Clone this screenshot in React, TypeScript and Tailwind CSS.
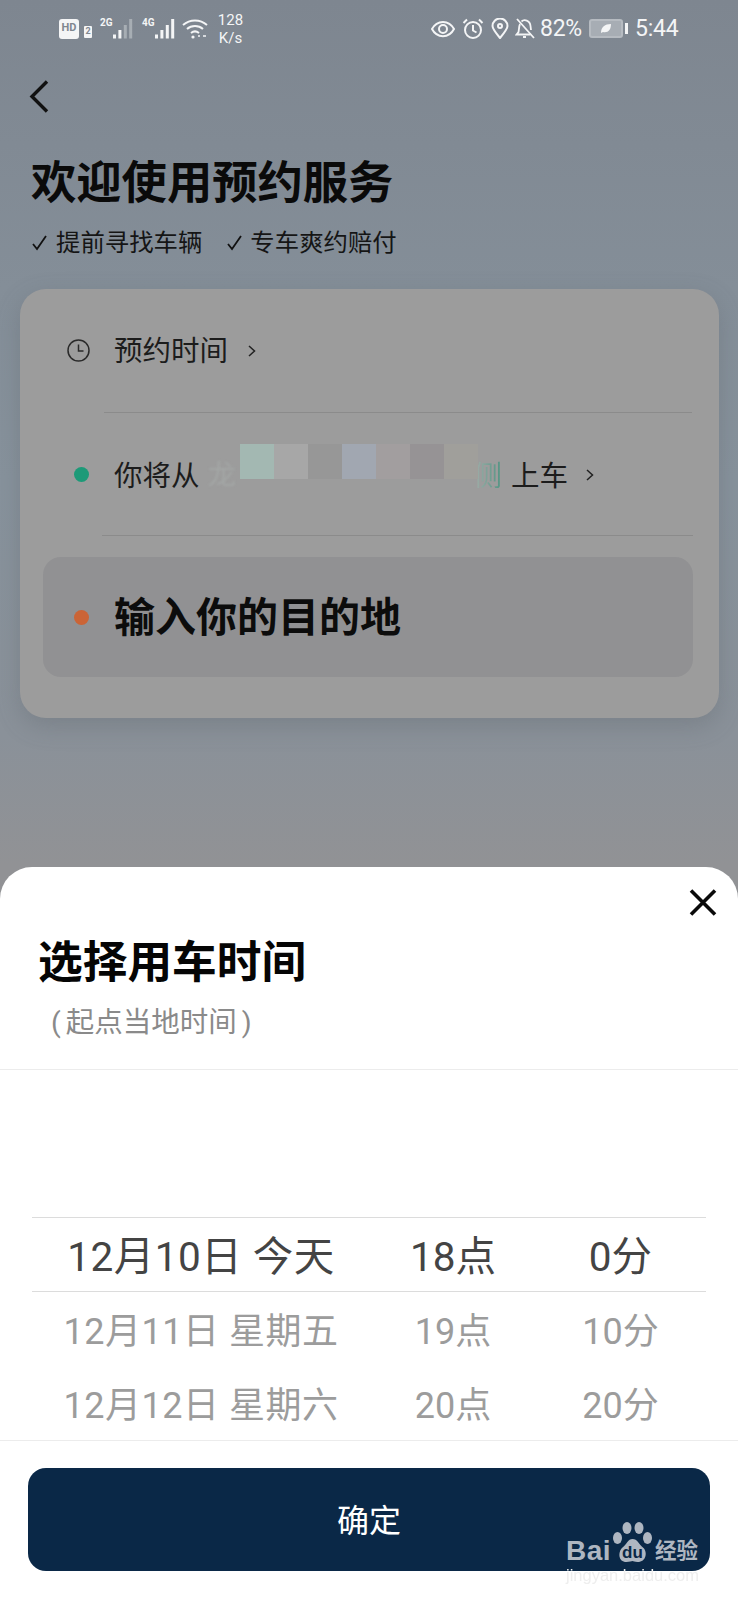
import React from "react";

const Bars = ({ faded }: { faded: number }) => (
  <svg width="22" height="20" viewBox="0 0 22 20">
    {[0, 1, 2, 3].map((i) => (
      <rect
        key={i}
        x={1 + i * 5.4}
        y={[15.5, 11, 6, 0][i]}
        width="3"
        height={[4, 8.5, 13.5, 19.5][i]}
        fill="#f4f5f6"
        opacity={i >= faded ? 0.35 : 1}
      />
    ))}
  </svg>
);

const Chevron = () => (
  <svg width="8" height="12" viewBox="0 0 8 12" fill="none" stroke="#222" strokeWidth="1.5">
    <path d="M1 1l5.5 5L1 11" />
  </svg>
);

const Check = () => (
  <svg width="15" height="16" viewBox="0 0 15 16" fill="none" stroke="#111" strokeWidth="1.8">
    <path d="M1 9l4 5L14 1" />
  </svg>
);

const patches = [
  "bg-[#a3b8b2]",
  "bg-[#a7a7a7]",
  "bg-[#979797]",
  "bg-[#a1a7b1]",
  "bg-[#a29e9f]",
  "bg-[#969395]",
  "bg-[#a09f9b]",
];

const rows = [
  { d: "12月10日 今天", h: "18点", m: "0分", cls: "text-[40.500px] text-[#444]", line: "border-y border-[#dcdcdc] h-[75px]" },
  { d: "12月11日 星期五", h: "19点", m: "10分", cls: "text-[36px] text-[#9c9c9c]", line: "h-[74px]" },
  { d: "12月12日 星期六", h: "20点", m: "20分", cls: "text-[36px] text-[#9c9c9c]", line: "h-[74px]" },
];

export default function App() {
  return (
    <div className="relative flex h-[1600px] w-[738px] flex-col overflow-hidden bg-[linear-gradient(180deg,#7e8690_0%,#848e98_18%,#87929c_30%,#8a9199_46%,#919295_54%)] font-['Roboto','Noto_Sans_CJK_SC',sans-serif]">
      {/* status bar */}
      <div className="flex h-[56px] shrink-0 items-center pl-[59px] pt-[1px] text-[#f4f5f6]">
        <div className="flex h-[20px] w-[20px] items-center justify-center rounded-[3px] bg-[#f4f5f6] text-[11px] font-bold text-[#7f8790]">
          HD
        </div>
        <div className="ml-[5px] mt-[6px] flex h-[12px] w-[8px] items-center justify-center rounded-[1px] bg-[#f4f5f6] text-[9px] font-bold leading-none text-[#7f8790]">
          2
        </div>
        <div className="ml-[8px] mb-[12px] w-[12px] text-[10px] font-bold leading-none">2G</div>
        <Bars faded={2} />
        <div className="ml-[8px] mb-[12px] w-[12px] text-[10px] font-bold leading-none">4G</div>
        <Bars faded={4} />
        <svg className="ml-[6px]" width="26" height="20" viewBox="0 0 26 20" fill="none" stroke="#f4f5f6" strokeWidth="2">
          <path d="M1 6c7-6 17-6 24 0M5 10c4.500-4 11.500-4 16 0M9 14c2.500-2 5.500-2 8 0" />
          <circle cx="11" cy="18" r="1.600" fill="#f4f5f6" stroke="none" />
          <path d="M16 17h2M21 17h3" strokeWidth="1.500" />
        </svg>
        <div className="ml-[9px] w-[27px] text-center text-[15px] leading-[18px]">
          <div>128</div>
          <div>K/s</div>
        </div>
        <svg className="ml-[187px]" width="24" height="18" viewBox="0 0 24 18" fill="none" stroke="#f4f5f6" strokeWidth="2">
          <path d="M1 9c5-9.500 17-9.500 22 0c-5 9.500-17 9.500-22 0z" />
          <circle cx="12" cy="9" r="4" />
        </svg>
        <svg className="ml-[7px]" width="22" height="22" viewBox="0 0 22 22" fill="none" stroke="#f4f5f6" strokeWidth="2">
          <circle cx="11" cy="12" r="8" />
          <path d="M11 7v5.500l3.500 2M1.500 5L5 1.500M20.500 5L17 1.500" />
        </svg>
        <svg className="ml-[7px]" width="18" height="21" viewBox="0 0 18 21" fill="none" stroke="#f4f5f6" strokeWidth="2">
          <path d="M9 20C4 14 1.500 11 1.500 8a7.500 7.500 0 0115 0c0 3-2.500 6-7.500 12z" />
          <circle cx="9" cy="8" r="2" />
        </svg>
        <svg className="ml-[6px]" width="20" height="21" viewBox="0 0 20 21" fill="none" stroke="#f4f5f6" strokeWidth="1.800">
          <path d="M5 6c-1 2-1 6-1.500 8L1.500 16.500h14M6.500 3.500C9 1 15 2 15.500 8l.5 4" />
          <path d="M8 19h3M2 1l17 19" />
        </svg>
        <div className="ml-[5px] w-[42px] text-[23px] leading-none tracking-[-0.3px]">82%</div>
        <div className="ml-[7px] flex h-[19px] w-[34px] items-center justify-center rounded-[3px] border-2 border-[#b6bbc1] bg-[#a7adb4]">
          <svg width="12" height="11" viewBox="0 0 12 11">
            <path d="M1 10C1 4 5 1 11 1c0 6-3 9-8 8z" fill="#f4f5f6" />
          </svg>
        </div>
        <div className="ml-[2px] h-[11px] w-[3px] bg-[#f4f5f6]" />
        <div className="ml-[7px] text-[23px] leading-none tracking-[-0.2px]">5:44</div>
      </div>

      {/* header */}
      <div className="pl-[29px] pt-[24px]">
        <svg width="20" height="33" viewBox="0 0 20 33" fill="none" stroke="#111" strokeWidth="3.400">
          <path d="M18 1.500L3 16.500l15 15" />
        </svg>
      </div>
      <h1 className="ml-[31px] mt-[43px] mb-[-2px] text-[45.300px] font-bold leading-[56px] text-[#0a0a0a]">欢迎使用预约服务</h1>
      <div className="ml-[32px] mt-[18px] flex items-center text-[24.400px] leading-[30px] text-[#151515]">
        <Check />
        <span className="ml-[9px]">提前寻找车辆</span>
        <span className="ml-[25px]"><Check /></span>
        <span className="ml-[8px]">专车爽约赔付</span>
      </div>

      {/* card */}
      <div className="ml-[20px] mt-[31px] flex h-[429px] w-[699px] flex-col rounded-[26px] bg-[#9c9c9c] shadow-[0_8px_24px_rgba(85,92,100,0.3)]">
        <div className="flex h-[123px] items-center pl-[47px] text-[28.500px] text-[#1c1c1c]">
          <svg width="23" height="23" viewBox="0 0 23 23" fill="none" stroke="#2a2a2a" strokeWidth="1.500">
            <circle cx="11.500" cy="11.500" r="10.500" />
            <path d="M11.500 5.500v6.500h5" />
          </svg>
          <span className="ml-[24px] pt-[4px]">预约时间</span>
          <span className="ml-[20px]"><Chevron /></span>
        </div>
        <div className="ml-[84px] h-px w-[588px] bg-[#8b8b8b]" />
        <div className="flex h-[122px] items-center pl-[54px] text-[28.500px] text-[#1c1c1c]">
          <div className="h-[15px] w-[15px] rounded-full bg-[#1d9a78]" />
          <span className="ml-[25px] pt-[6px]">你将从</span>
          <div className="relative h-[40px] w-[274px]">
            <span className="ml-[8px] inline-block pt-[2px] leading-[40px] text-[#a3a6a5] blur-[1px]">龙</span>
            <div className="absolute left-[40px] top-[-10px] flex">
              {patches.map((p) => (
                <div key={p} className={`h-[35px] w-[34px] ${p}`} />
              ))}
            </div>
          </div>
          <span className="bg-[linear-gradient(90deg,#a4aeaa,#4f9482)] bg-clip-text pt-[6px] text-transparent">侧</span>
          <span className="ml-[9px] pt-[6px]">上车</span>
          <span className="ml-[18px] mt-[2px]"><Chevron /></span>
        </div>
        <div className="ml-[82px] h-px w-[591px] bg-[#8b8b8b]" />
        <div className="ml-[23px] mt-[21px] flex h-[120px] w-[650px] items-center rounded-[18px] bg-[#919193] pl-[31px]">
          <div className="h-[15px] w-[15px] rounded-full bg-[#cb6436]" />
          <span className="ml-[25px] pt-[2px] text-[41px] font-bold leading-none text-[#0c0c0c]">输入你的目的地</span>
        </div>
      </div>

      {/* bottom sheet */}
      <div className="mt-auto flex h-[733px] w-full flex-col rounded-t-[32px] bg-white">
        <div className="flex justify-end pr-[21px] pt-[22px]">
          <svg width="28" height="27" viewBox="0 0 28 27" fill="none" stroke="#0a0a0a" strokeWidth="3.600">
            <path d="M2 1.500l24 24M26 1.500l-24 24" />
          </svg>
        </div>
        <h2 className="ml-[38px] mt-[19px] text-[44.700px] font-bold leading-[56px] text-[#050505]">选择用车时间</h2>
        <div className="ml-[51px] mt-[14px] text-[28.500px] leading-[36px] text-[#8a8a8a]">
          (<span className="mx-[5px]">起点当地时间</span>)
        </div>
        <div className="mt-[28px] h-px w-full bg-[#ececec]" />
        <div className="mx-[32px] mt-[147px]">
          {rows.map((r) => (
            <div key={r.d} className={`grid grid-cols-[338px_166px_169px] items-center pt-[5px] text-center leading-none ${r.cls} ${r.line}`}>
              <div className="tracking-[0.5px]">{r.d}</div>
              <div>{r.h}</div>
              <div>{r.m}</div>
            </div>
          ))}
        </div>
        <div className="h-px w-full bg-[#ececec]" />
        <button className="mx-[28px] mt-[27px] flex h-[103px] items-center justify-center rounded-[18px] bg-[#0a2847] pt-[3px] text-[32px] text-white">
          确定
        </button>
      </div>

      {/* watermark */}
      <div className="absolute left-[566px] top-[1522px] w-[135px] text-[#aeb6c1]">
        <div className="flex items-end">
          <span className="mb-[-3px] font-['Liberation_Sans',sans-serif] text-[28px] font-bold leading-[30px] tracking-[0.5px]">Bai</span>
          <svg className="ml-[2px]" width="39" height="41" viewBox="0 0 39 41" fill="#aeb6c1">
            <ellipse cx="4.500" cy="16" rx="4.500" ry="6" />
            <ellipse cx="14" cy="6" rx="4.500" ry="6" />
            <ellipse cx="26" cy="6" rx="4.500" ry="6" />
            <ellipse cx="34.500" cy="16" rx="4.500" ry="6" />
            <path d="M19.500 17c5 0 6 5 11 9 4 4 3 14-6 14-3 0-4-1-5-1s-3 1-6 1C5 40 5 30 9 26c5-4 6-9 10.500-9z" />
            <text x="19.500" y="36" textAnchor="middle" fontSize="17" fontWeight="700" fontFamily="Liberation Sans" fill="#0a2847">du</text>
          </svg>
          <span className="mb-[-3px] ml-[3px] text-[21.500px] font-bold leading-[30px]">经验</span>
        </div>
        <div className="mt-[3px] font-['Liberation_Sans',sans-serif] text-[16.500px] leading-[18px] text-[#eeeeee] blur-[0.5px]">jingyan.baidu.com</div>
      </div>
    </div>
  );
}
